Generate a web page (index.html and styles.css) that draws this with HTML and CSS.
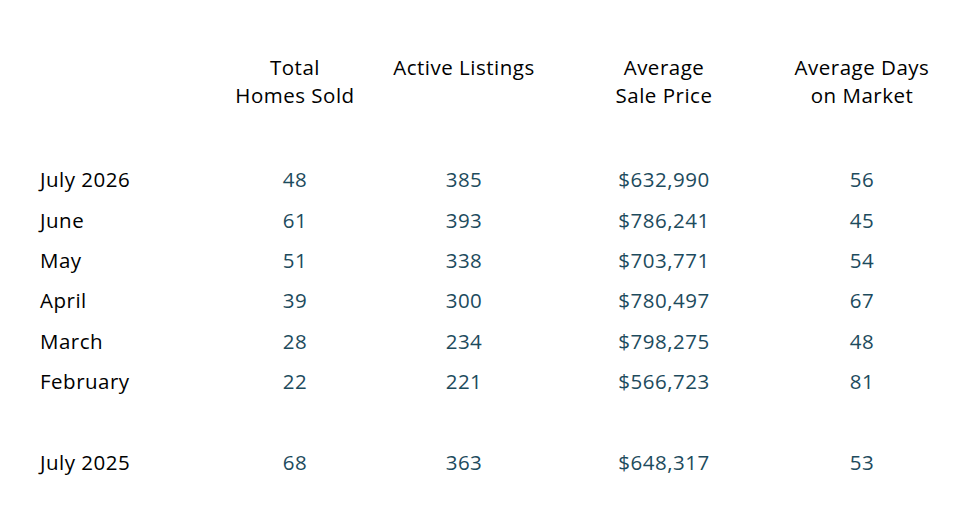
FILE: index.html
```html
<!DOCTYPE html>
<html>
<head>
<meta charset="utf-8">
<link rel="stylesheet" href="styles.css">
</head>
<body>
<div class="table">
  <div class="row head">
    <div class="c label"></div>
    <div class="c c1">Total<br>Homes Sold</div>
    <div class="c c2">Active Listings</div>
    <div class="c c3">Average<br>Sale Price</div>
    <div class="c c4">Average Days<br>on Market</div>
  </div>
  <div class="body">
    <div class="row"><div class="c label">July 2026</div><div class="c c1 n">48</div><div class="c c2 n">385</div><div class="c c3 n">$632,990</div><div class="c c4 n">56</div></div>
    <div class="row"><div class="c label">June</div><div class="c c1 n">61</div><div class="c c2 n">393</div><div class="c c3 n">$786,241</div><div class="c c4 n">45</div></div>
    <div class="row"><div class="c label">May</div><div class="c c1 n">51</div><div class="c c2 n">338</div><div class="c c3 n">$703,771</div><div class="c c4 n">54</div></div>
    <div class="row"><div class="c label">April</div><div class="c c1 n">39</div><div class="c c2 n">300</div><div class="c c3 n">$780,497</div><div class="c c4 n">67</div></div>
    <div class="row"><div class="c label">March</div><div class="c c1 n">28</div><div class="c c2 n">234</div><div class="c c3 n">$798,275</div><div class="c c4 n">48</div></div>
    <div class="row"><div class="c label">February</div><div class="c c1 n">22</div><div class="c c2 n">221</div><div class="c c3 n">$566,723</div><div class="c c4 n">81</div></div>
    <div class="row spacer"></div>
    <div class="row"><div class="c label">July 2025</div><div class="c c1 n">68</div><div class="c c2 n">363</div><div class="c c3 n">$648,317</div><div class="c c4 n">53</div></div>
  </div>
</div>
</body>
</html>
```

FILE: styles.css
```css
html, body {
  margin: 0;
  background: #ffffff;
}
body {
  font-family: "Open Sans", "Noto Sans", sans-serif;
  font-size: 20.5px;
  letter-spacing: 0.5px;
  color: #000000;
}
.table {
  padding: 53px 0 0 40px;
}
.row {
  display: grid;
  grid-template-columns: 170px 170px 168px 232px 164px;
  align-items: center;
  height: 40.4px;
}
.row.head {
  height: auto;
  line-height: 28px;
  align-items: start;
}
.body {
  margin-top: 50px;
}
.row.spacer {
  height: 40.6px;
}
.c {
  text-align: center;
}
.c.label {
  text-align: left;
}
.n {
  color: #1d4b5d;
}
```
